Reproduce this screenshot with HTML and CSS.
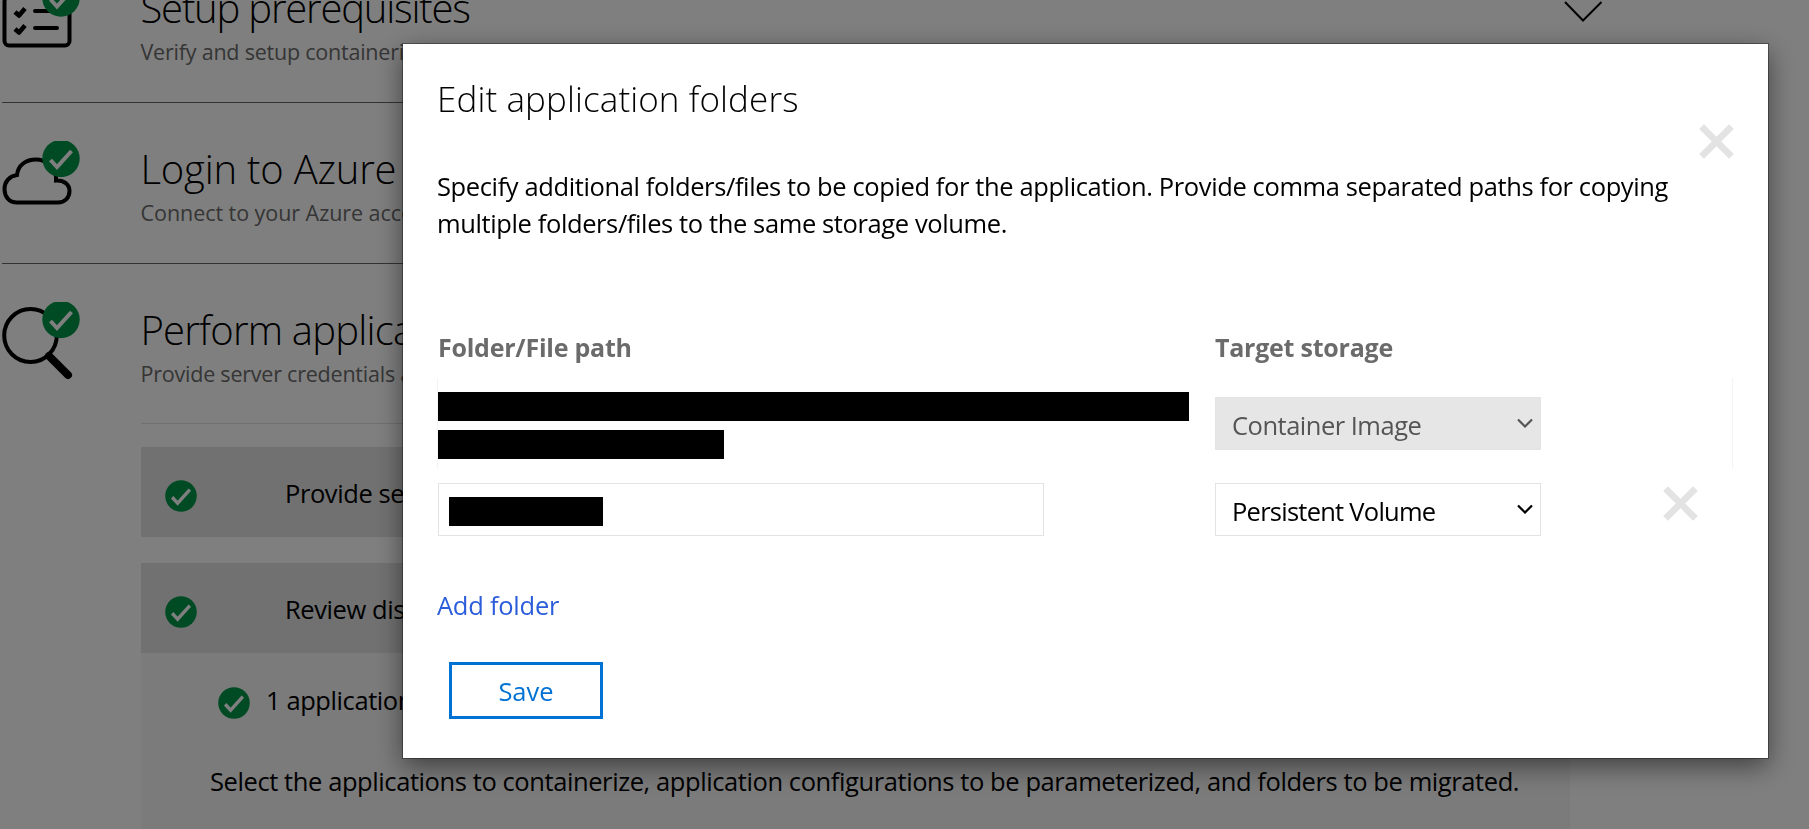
FILE: index.html
```html
<!DOCTYPE html>
<html lang="en">
<head>
<meta charset="utf-8">
<title>Edit application folders</title>
<link rel="stylesheet" href="styles.css">
</head>
<body>
<svg class="defs" width="0" height="0">
  <symbol id="ok" viewBox="0 0 38 38"><circle cx="19" cy="19" r="18.700" fill="#009749"/><path d="M8.500 20.500l6.500 7L29.500 11.500" fill="none" stroke="#fff" stroke-width="4"/></symbol>
  <symbol id="cross" viewBox="0 0 34 34"><path d="M2.500 2.500l29 29M31.500 2.500l-29 29" stroke="#e3e3e3" stroke-width="6.500" fill="none"/></symbol>
  <symbol id="chev" viewBox="0 0 16 10"><path d="M1 1.500l7 7 7-7" stroke="currentColor" stroke-width="2.200" fill="none"/></symbol>
</svg>

<main class="page">
  <section class="step">
    <svg class="step-icon" viewBox="0 0 82 90"><rect x="4.500" y="16" width="65" height="48.500" rx="4.500" fill="none" stroke="#000" stroke-width="4"/><path d="M15 31l4 3.500 6-7M15 48l4 3.500 6-7" fill="none" stroke="#000" stroke-width="4.500" stroke-linejoin="round"/><path d="M35 30h22M35 47h22" stroke="#000" stroke-width="4" stroke-linecap="round"/><use href="#ok" x="42" y="-2" width="38" height="38"/></svg>
    <div class="step-text"><h2 class="step-title setup">Setup prerequisites</h2><p class="step-sub">Verify and setup containerization prerequisites</p></div>
    <svg class="step-chev" viewBox="0 0 40 22"><path d="M2 2l18 18.500L38.500 2" stroke="#000" stroke-width="2" fill="none"/></svg>
  </section>
  <section class="step">
    <svg class="step-icon" viewBox="0 0 82 90"><path d="M17 61.500C9 61.500 4.500 55.500 4.500 48C4.500 40.500 9.500 35 17 34C18 24 26 18.500 36 18.500C46 18.500 53 26 56 35V39.500C64 39 69.500 43.500 69.500 50C69.500 57 64.500 61.500 58 61.500Z" fill="none" stroke="#000" stroke-width="4"/><use href="#ok" x="42" y="-1.500" width="38" height="38"/></svg>
    <div class="step-text"><h2 class="step-title">Login to Azure</h2><p class="step-sub connect">Connect to your Azure account</p></div>
  </section>
  <section class="step last">
    <svg class="step-icon" viewBox="0 0 82 90"><ellipse cx="30.500" cy="33.500" rx="26.300" ry="26.500" fill="none" stroke="#000" stroke-width="4"/><path d="M49 54l19 19" stroke="#000" stroke-width="8" stroke-linecap="round"/><use href="#ok" x="42" y="-1.500" width="38" height="38"/></svg>
    <div class="step-text"><h2 class="step-title perform">Perform application discovery</h2><p class="step-sub">Provide server credentials and discover applications</p></div>
  </section>

  <div class="tasks">
    <div class="task"><svg class="tick"><use href="#ok"/></svg><span>Provide server credentials</span></div>
    <div class="task"><svg class="tick"><use href="#ok"/></svg><span>Review discovered applications</span></div>
    <div class="task-body">
      <div class="found"><svg class="tick"><use href="#ok"/></svg><span>1 application discovered</span></div>
      <p class="hint">Select the applications to containerize, application configurations to be parameterized, and folders to be migrated.</p>
    </div>
  </div>
</main>

<div class="backdrop">
  <div class="modal">
    <h1 class="modal-title">Edit application folders</h1>
    <svg class="close"><use href="#cross"/></svg>
    <p class="lead">Specify additional folders/files to be copied for the application. Provide comma separated paths for copying<br>multiple folders/files to the same storage volume.</p>
    <div class="grid head"><b>Folder/File path</b><b>Target storage</b></div>
    <div class="grid fixed">
      <div class="path"><i class="bar long"></i><i class="bar mid"></i></div>
      <div class="select disabled"><span>Container Image</span><svg class="arrow"><use href="#chev"/></svg></div>
    </div>
    <div class="grid edit">
      <div class="input"><i class="bar short"></i></div>
      <div class="select"><span class="volume">Persistent Volume</span><svg class="arrow"><use href="#chev"/></svg></div>
      <svg class="remove"><use href="#cross"/></svg>
    </div>
    <a class="add">Add folder</a>
    <div class="save">Save</div>
  </div>
</div>
</body>
</html>
```

FILE: styles.css
```css
* { box-sizing: border-box; margin: 0; padding: 0; }
body { width: 1809px; height: 829px; overflow: hidden; background: #fff; color: #000; font: 25.5px/36px "Open Sans", "Noto Sans", sans-serif; letter-spacing: -.41px; }
.defs { position: absolute; }
svg { display: block; flex: none; }

/* wizard steps */
.page { margin-top: -19px; width: 1809px; padding-left: 2px; }
.step { display: flex; height: 161px; width: 1601px; border-bottom: 1px solid #666; }
.step:first-child { height: 122px; }
.step-icon { width: 82px; height: 90px; margin: 0 57px 0 -2px; }
.step:not(:first-child) .step-icon { margin-top: 38px; }
.step-text { flex: 1; white-space: nowrap; padding-left: 1.5px; }
.step:not(:first-child) .step-text { padding-top: 39px; }
.step-title { font-weight: 300; font-size: 40px; line-height: 54px; letter-spacing: -.2px; }
.setup { letter-spacing: -1.2px; }
.perform { letter-spacing: -.8px; }
.step-sub { margin-top: 2px; font-size: 21.5px; line-height: 30px; letter-spacing: -.22px; color: #6b6b6b; }
.connect { letter-spacing: -.05px; }
.step-chev { width: 40px; height: 22px; margin-top: 19px; }
.step.last { border-bottom: 0; height: 159px; }

/* expanded step */
.tasks { margin-left: 139px; width: 1429px; border-top: 1px solid #e0e0e0; padding-top: 23px; white-space: nowrap; }
.task { display: flex; align-items: center; height: 90px; background: #e3e3e3; padding: 1px 0 0 24px; gap: 88px; margin-bottom: 26px; }
.task + .task { margin-bottom: 0; }
.tick { width: 32px; height: 32px; margin-top: 6px; }
.task-body { background: #f7f7f7; height: 177px; padding: 34px 0 0 69px; }
.found { display: flex; gap: 16px; height: 32px; padding-left: 8px; line-height: 27px; }
.found .tick { margin-top: 0; }
.hint { margin-top: 44px; }

/* dialog */
.backdrop { position: fixed; inset: 0; background: rgba(0, 0, 0, .5); }
.modal { position: absolute; left: 403px; top: 44px; width: 1365px; height: 714px; background: #fff; padding: 32px 35px 0; box-shadow: 0 0 0 1px rgba(0, 0, 0, .35), 0 8px 25px rgba(0, 0, 0, .5); }
.modal-title { font-weight: 300; font-size: 35px; line-height: 46px; letter-spacing: .11px; margin: 0 0 2px -1px; }
.close { width: 35px; height: 35px; margin: 0 -1px 0 auto; }
.lead { margin: 9px 0 0 -1px; line-height: 36.700px; white-space: nowrap; height: 148px; letter-spacing: -.385px; }
.grid { display: grid; grid-template-columns: 777px 326px auto; }
.head { color: #6b6b6b; height: 62px; align-items: center; font-size: 25px; letter-spacing: -.24px; }
.head b { font-weight: 700; }
.fixed { height: 91px; border: solid #f4f4f4; border-width: 0 1px; margin-left: -1px; padding-top: 14px; }
.bar { display: block; background: #000; height: 29px; }
.long { width: 751px; margin-bottom: 9px; }
.mid { width: 286px; }
.select { display: flex; align-items: center; justify-content: space-between; height: 53px; padding: 2px 7px 0 16px; border: 1px solid #e3e3e3; }
.fixed .select { margin-top: 5px; }
.disabled { background: #e6e6e6; color: #555; letter-spacing: -.5px; }
.volume { letter-spacing: -.75px; }
.arrow { width: 16px; height: 10px; margin-top: -4px; }
.edit { margin-top: 14px; height: 53px; }
.input { width: 606px; border: 1px solid #e3e3e3; padding: 13px 0 0 10px; }
.short { width: 154px; }
.remove { width: 35px; height: 35px; margin: 3px 0 0 122px; }
.add { display: block; margin: 51px 0 0 -1px; color: #2b5ddb; letter-spacing: -.25px; }
.save { margin: 39px 0 0 11px; width: 154px; height: 57px; border: 3px solid #0072d4; color: #0072d4; display: flex; align-items: center; justify-content: center; letter-spacing: 0; }
```
